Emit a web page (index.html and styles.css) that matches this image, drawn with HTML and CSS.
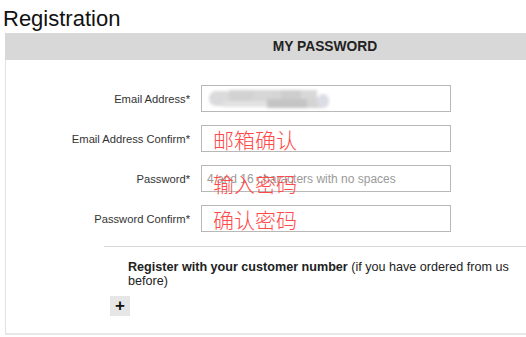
FILE: index.html
```html
<!DOCTYPE html>
<html>
<head>
<meta charset="utf-8">
<link rel="stylesheet" href="styles.css">
</head>
<body>
<h1 class="title">Registration</h1>
<div class="panel">
  <div class="panel-head">MY PASSWORD</div>
  <div class="form">
    <div class="label">Email Address*</div>
    <div class="field">
      <svg class="blur" width="124" height="24" viewBox="0 0 124 24">
        <defs><filter id="b" x="-20%" y="-40%" width="140%" height="180%"><feGaussianBlur stdDeviation="1.4"/></filter></defs>
        <g filter="url(#b)">
          <rect x="2" y="4" width="24" height="15" rx="7" fill="#dadadc"/>
          <rect x="22" y="3" width="26" height="14" fill="#d2d2d2"/>
          <rect x="46" y="3" width="30" height="13" fill="#d6d6d6"/>
          <rect x="74" y="3" width="22" height="11" fill="#cdcdcf"/>
          <rect x="94" y="3" width="16" height="11" fill="#d8d8d8"/>
          <rect x="60" y="12" width="44" height="9" fill="#c4c4c4"/>
          <rect x="100" y="11" width="14" height="10" fill="#d4d4d4"/>
          <rect x="110" y="7" width="12" height="14" rx="6" fill="#dcdce6"/>
          <rect x="16" y="14" width="44" height="6" fill="#e2e2e2"/>
        </g>
      </svg>
    </div>
    <div class="label">Email Address Confirm*</div>
    <div class="field"><span class="note">邮箱确认</span></div>
    <div class="label">Password*</div>
    <div class="field"><span class="placeholder">4 and 16 characters with no spaces</span><span class="note note-low">输入密码</span></div>
    <div class="label">Password Confirm*</div>
    <div class="field"><span class="note">确认密码</span></div>
  </div>
  <div class="more">
    <p class="more-text"><b>Register with your customer number</b> (if you have ordered from us before)</p>
    <div class="plus">+</div>
  </div>
</div>
</body>
</html>
```
FILE: styles.css
```css
html, body {
  margin: 0;
  padding: 0;
  overflow: hidden;
  background: #fff;
}
body {
  font-family: "Liberation Sans", Arial, sans-serif;
  color: #222;
}
.title {
  margin: 6px 0 0 3px;
  font-size: 22px;
  line-height: 25px;
  font-weight: normal;
  color: #111;
  height: 27px;
}
.panel {
  margin-left: 5px;
  width: 640px;
  box-sizing: border-box;
  border-left: 1px solid #e2e2e2;
  border-bottom: 2px solid #e8e8e8;
  padding-bottom: 17px;
}
.panel-head {
  background: #d8d8d8;
  height: 27px;
  line-height: 28px;
  text-align: center;
  font-weight: bold;
  font-size: 13.8px;
  color: #222;
  margin-left: -1px;
}
.form {
  display: grid;
  grid-template-columns: 184px 250px;
  column-gap: 11px;
  row-gap: 13px;
  padding-top: 25px;
}
.label {
  text-align: right;
  align-self: center;
  font-size: 11.2px;
  color: #333;
  padding-top: 1px;
}
.field {
  position: relative;
  height: 27px;
  box-sizing: border-box;
  border: 1px solid #b8b8b8;
  display: flex;
  align-items: center;
  padding-left: 5px;
}
.blur {
  display: block;
}
.placeholder {
  font-size: 12px;
  color: #9a9a9a;
}
.note {
  position: absolute;
  left: 11px;
  top: 1px;
  font-family: "Noto Sans CJK SC", sans-serif;
  font-size: 21px;
  line-height: 24px;
  color: #ff4a4a;
  font-weight: 300;
}
.note-low {
  top: 5px;
}
.more {
  margin: 14px 0 0 98px;
  border-top: 1px solid #d8d8d8;
  padding: 13px 0 0 6px;
}
.more-text {
  margin: 0 0 0 18px;
  width: 400px;
  font-size: 12.6px;
  line-height: 14px;
  color: #222;
}
.plus {
  margin-top: 8px;
  width: 20px;
  height: 20px;
  background: #e6e6e6;
  text-align: center;
  line-height: 20px;
  font-size: 17px;
  font-weight: bold;
  color: #111;
}
```
